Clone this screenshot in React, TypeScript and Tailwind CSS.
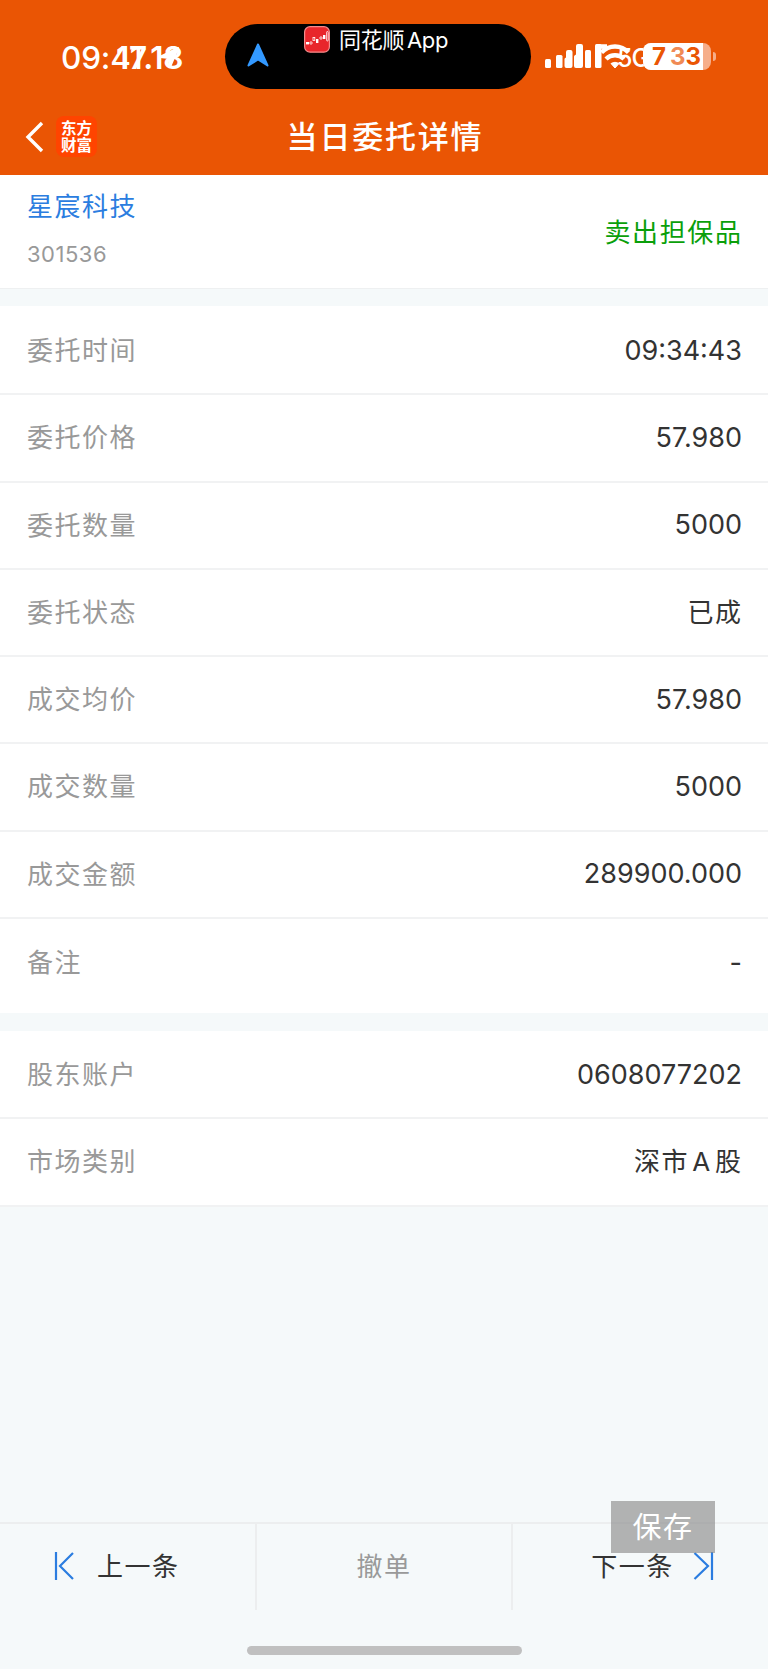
import type { ReactNode } from "react";

interface DetailItem {
  label: string;
  value: string;
}

const orderItems: DetailItem[] = [
  { label: "委托时间", value: "09:34:43" },
  { label: "委托价格", value: "57.980" },
  { label: "委托数量", value: "5000" },
  { label: "委托状态", value: "已成" },
  { label: "成交均价", value: "57.980" },
  { label: "成交数量", value: "5000" },
  { label: "成交金额", value: "289900.000" },
  { label: "备注", value: "-" },
];

const accountItems: DetailItem[] = [
  { label: "股东账户", value: "0608077202" },
  { label: "市场类别", value: "深市 A 股" },
];

function DetailRow({ item, last }: { item: DetailItem; last?: boolean }) {
  const isText = /[\u4e00-\u9fff]/.test(item.value);
  return (
    <div
      className={`flex h-[87.25px] items-center justify-between px-[27px] ${
        last ? "" : "border-b-2 border-[#f1f2f3]"
      }`}
    >
      <span className="text-[26px] tracking-[1.5px] text-[#999999]">{item.label}</span>
      <span
        className={
          isText
            ? "-mr-[1.5px] text-[26px] tracking-[1.5px] text-[#333333] [word-spacing:-5.5px]"
            : "-mr-px pt-px text-[27px] text-[#333333]"
        }
      >
        {item.value}
      </span>
    </div>
  );
}

function StatusBar() {
  return (
    <div className="relative h-[96px]">
      {/* Clock, caught halfway through its change to the next status */}
      <span className="absolute left-[61px] top-[39px] text-[31.5px] leading-[37px] font-medium tracking-[-0.2px]">
        09:41
      </span>
      <span className="absolute left-[116px] top-[39px] text-[31.5px] leading-[37px] font-semibold tracking-[-0.2px]">
        17.18
      </span>
      <svg className="absolute left-[158px] top-[46px]" width="22" height="23" viewBox="0 0 22 23" fill="#fff">
        <path
          d="M2 11 20 2 12 21 11 12Z"
          stroke="#fff"
          strokeWidth="2"
          strokeLinejoin="round"
        />
      </svg>

      {/* Dynamic island */}
      <div className="absolute left-[225px] top-[24px] h-[65px] w-[306px] rounded-full bg-black">
        <svg className="absolute left-[22px] top-[19px]" width="22" height="25" viewBox="0 0 22 25">
          <path
            d="M11 1.5 1.5 22.5 11 16.5 20.5 22.5Z"
            fill="#3399ff"
            stroke="#3399ff"
            strokeWidth="2"
            strokeLinejoin="round"
          />
        </svg>
        <svg className="absolute left-[79px] top-[2px]" width="26" height="27" viewBox="0 0 26 27">
          <rect x="0.6" y="0.6" width="24.8" height="25.6" rx="5.5" fill="#e8262b" stroke="#f58b8b" strokeWidth="1.2" />
          <g fill="#fff">
            <rect x="2" y="16" width="3" height="2.4" />
            <rect x="12" y="13" width="2.4" height="4" />
            <rect x="19" y="9" width="2.4" height="4" />
          </g>
          <g fill="none" stroke="#fff" strokeWidth="0.8">
            <circle cx="7" cy="17" r="1.2" />
            <rect x="9" y="11.5" width="1.8" height="3" />
            <circle cx="17" cy="12" r="1.2" />
            <rect x="22.6" y="5.5" width="1.6" height="9.5" rx="0.8" />
          </g>
        </svg>
        <span className="absolute left-[114px] top-px whitespace-nowrap text-[22px] leading-[31px] tracking-[-0.3px] [word-spacing:-3px]">
          同花顺 App
        </span>
      </div>

      {/* Signal, wifi, network type and battery */}
      <svg className="absolute left-[544px] top-[42px]" width="90" height="28" viewBox="0 0 90 28">
        <g fill="#fff">
          <rect x="1" y="17" width="6" height="9" rx="1.5" />
          <rect x="12" y="13" width="6.500" height="13" rx="1.5" />
          <path d="M20.500 17Q20.500 16 22 15.500V10Q22 8 24 8H26.500Q28.500 8 28.500 10V24Q28.500 26 26.500 26H22.500Q20.500 26 20.500 24Z" />
          <path d="M30 14.500Q30 13.500 32 12.500V4Q32 2 34 2H37Q39 2 39 4V24Q39 26 37 26H32Q30 26 30 24Z" />
          <rect x="41" y="8" width="6" height="18" rx="1.5" />
          <rect x="51" y="2" width="6.500" height="24" rx="1.5" />
          <path d="M67 21.500Q71 19 75 21.500L71 26Z" stroke="#fff" strokeLinejoin="round" />
        </g>
        <g fill="none" stroke="#fff" strokeWidth="4.400">
          <path d="M56 4.500H63M57.500 10.500C65 2.500 77 2.500 84.500 10.500" />
          <path d="M62 17C67 12 75 12 80 17" />
        </g>
      </svg>
      <span className="absolute left-[617px] top-[43px] text-[25px] leading-[30px] font-medium tracking-[-1px]">5G</span>
      <div className="absolute left-[643px] top-[43px] flex h-[27px] w-[68px] overflow-hidden rounded-[8px] bg-[#f6ae8a]">
        <div className="w-[60px] bg-white" />
        <span className="absolute left-[9px] top-0 text-[24px] leading-[27px] font-bold text-[#ea5504]">7</span>
        <span className="absolute left-[27px] top-0 text-[24px] leading-[27px] font-bold text-[#ea5504]">
          <span className="text-[#f08a55]">3</span>3
        </span>
      </div>
      <div className="absolute left-[713px] top-[52px] h-[9px] w-[3px] rounded-r-full bg-[#f6ae8a]" />
    </div>
  );
}

function FooterCell({ children }: { children: ReactNode }) {
  return (
    <div className="relative flex flex-1 items-center pb-[2px] text-[26px] tracking-[1.5px]">{children}</div>
  );
}

export default function App() {
  return (
    <main className="flex h-[1669px] w-[768px] flex-col overflow-hidden bg-[#f5f9fa] font-['Inter','Noto_Sans_CJK_SC',sans-serif]">
      <header className="h-[175px] shrink-0 bg-[#ea5504] text-white">
        <StatusBar />
        <div className="flex h-[81px] items-center px-[25px]">
          <div className="flex w-[150px] items-center gap-[12px]">
            <svg width="19" height="32" viewBox="0 0 19 32" fill="none" stroke="#fff" strokeWidth="3.4">
              <path d="M17 2 3 16 17 30" />
            </svg>
            <div className="flex h-[41px] w-[41px] items-center justify-center rounded-[8px] bg-[#ff4400] text-center text-[15.5px] leading-[17px] font-bold">
              东方
              <br />
              财富
            </div>
          </div>
          <h1 className="flex-1 text-center text-[31px] leading-[40px] font-medium tracking-[1.8px]">当日委托详情</h1>
          <div className="w-[148px]" />
        </div>
      </header>

      <section className="flex h-[114px] shrink-0 items-center justify-between border-b border-[#eef0f1] bg-white px-[27px]">
        <div className="flex h-full flex-col">
          <span className="mt-[12px] text-[26px] leading-[40px] tracking-[1.5px] text-[#2b7de0]">星宸科技</span>
          <span className="mt-[12px] text-[22px] leading-[30px] tracking-[0.5px] text-[#999999]">301536</span>
        </div>
        <span className="mt-[2px] -mr-[1.5px] text-[26px] tracking-[1.6px] text-[#0a9f0a]">卖出担保品</span>
      </section>

      <section className="mt-[17px] h-[707px] shrink-0 bg-white pt-[2px]">
        {orderItems.map((item, index) => (
          <DetailRow key={item.label} item={item} last={index === orderItems.length - 1} />
        ))}
      </section>

      <section className="mt-[18px] shrink-0 bg-white pt-px">
        {accountItems.map((item) => (
          <DetailRow key={item.label} item={item} />
        ))}
      </section>

      <footer className="relative mt-auto h-[147px] shrink-0 border-t-2 border-[#eceeef]">
        <div className="flex h-[86px] divide-x-2 divide-[#eceeef] text-[#333333]">
          <FooterCell>
            <svg className="ml-[53px] -mt-px" width="21" height="30" viewBox="0 0 21 30" fill="none" stroke="#2b7de0" strokeWidth="2.2">
              <path d="M3 1V29M20 2 7 15 20 28" />
            </svg>
            <span className="ml-[23px]">上一条</span>
          </FooterCell>
          <FooterCell>
            <span className="w-full text-center text-[#999999]">撤单</span>
          </FooterCell>
          <FooterCell>
            <span className="ml-[78px]">下一条</span>
            <svg className="ml-[19px] -mt-px" width="21" height="30" viewBox="0 0 21 30" fill="none" stroke="#2b7de0" strokeWidth="2.2">
              <path d="M19 1V29M1.500 2 15 15 1.500 28" />
            </svg>
          </FooterCell>
        </div>
        {/* Home indicator */}
        <div className="mx-auto mt-[36px] h-[9px] w-[275px] rounded-full bg-[#c0c0c0]" />
        {/* Floating save button */}
        <button className="absolute left-[611px] top-[-23px] h-[52px] w-[104px] bg-[#8c8c8c]/65 pt-px text-[29px] leading-[52px] tracking-[1.6px] text-white">
          保存
        </button>
      </footer>
    </main>
  );
}
